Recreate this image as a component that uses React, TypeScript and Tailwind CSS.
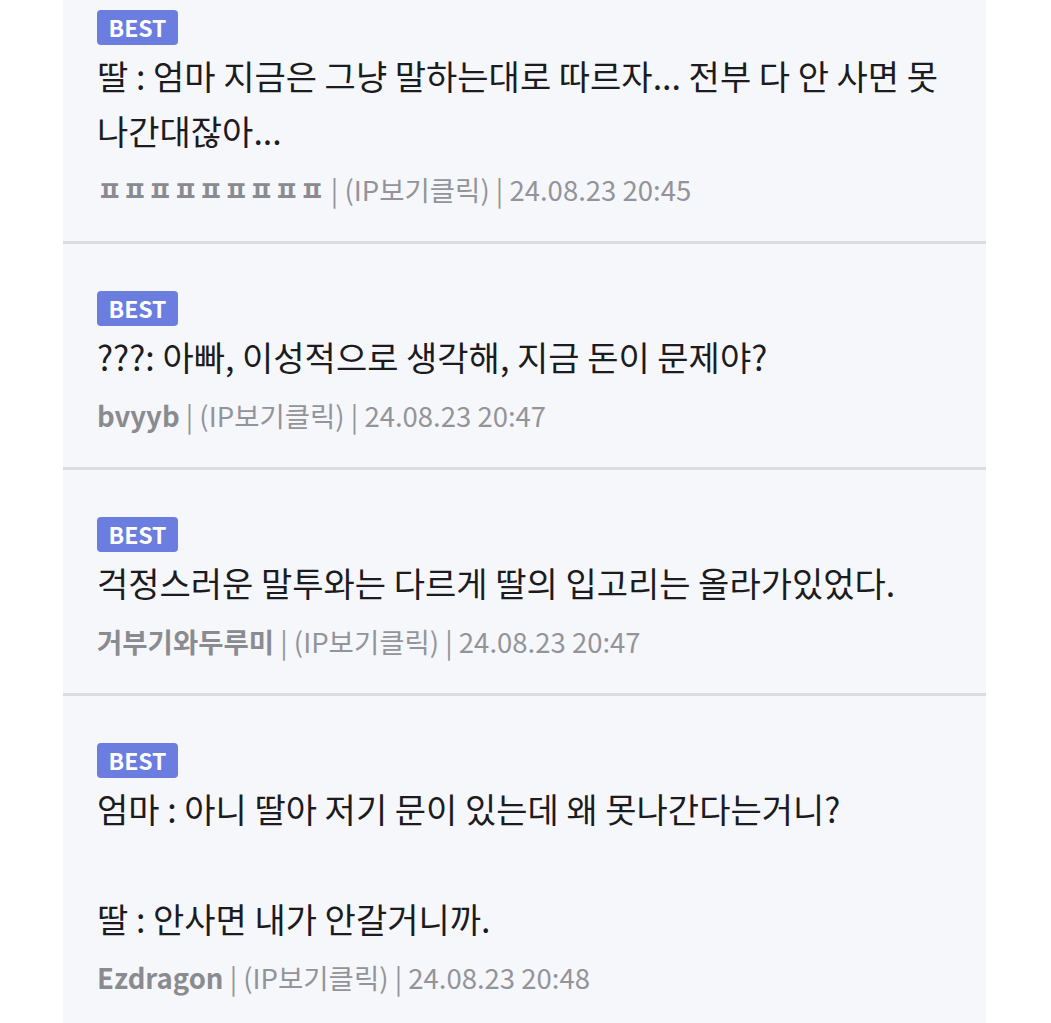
const comments = [
  {
    lines: ['딸 : 엄마 지금은 그냥 말하는대로 따르자... 전부 다 안 사면 못 나간대잖아...'],
    name: 'ㅍㅍㅍㅍㅍㅍㅍㅍㅍ',
    date: '24.08.23 20:45',
    first: true,
  },
  {
    lines: ['???: 아빠, 이성적으로 생각해, 지금 돈이 문제야?'],
    name: 'bvyyb',
    date: '24.08.23 20:47',
  },
  {
    lines: ['걱정스러운 말투와는 다르게 딸의 입고리는 올라가있었다.'],
    name: '거부기와두루미',
    date: '24.08.23 20:47',
  },
  {
    lines: ['엄마 : 아니 딸아 저기 문이 있는데 왜 못나간다는거니?', '', '딸 : 안사면 내가 안갈거니까.'],
    name: 'Ezdragon',
    date: '24.08.23 20:48',
    last: true,
  },
];

function Comment({ c }: { c: (typeof comments)[number] }) {
  return (
    <div className={`pl-[34px] pr-[30px] ${c.first ? 'pt-[10px]' : 'pt-[47px]'} pb-[32px]`}>
      <div className="flex">
        <span className="h-[35px] w-[81px] rounded-[4px] bg-[#6b7ddf] text-white font-bold text-[23px] leading-[35px] text-center">
          BEST
        </span>
      </div>
      <div className="mt-[3px] text-[34px] leading-[55px] text-[#1c1c1e]">
        {c.lines.map((l, i) => (
          <p key={i} className="min-h-[55px]">{l}</p>
        ))}
      </div>
      <div className="mt-[11px] text-[27.5px] leading-[40px] text-[#939499]">
        <span className="font-bold text-[#8a8b90]">{c.name}</span>
        <span> | (IP보기클릭) | {c.date}</span>
      </div>
    </div>
  );
}

export default function App() {
  return (
    <div
      className="min-h-[1023px] bg-white"
      style={{ fontFamily: '"Noto Sans CJK KR", "Noto Sans", sans-serif' }}
    >
      <div className="ml-[63px] w-[923px] min-h-[1023px] bg-[#f6f7fb]">
        {comments.map((c, i) => (
          <div key={i} className={c.last ? '' : 'border-b-[3px] border-[#dcdde1]'}>
            <Comment c={c} />
          </div>
        ))}
      </div>
    </div>
  );
}
